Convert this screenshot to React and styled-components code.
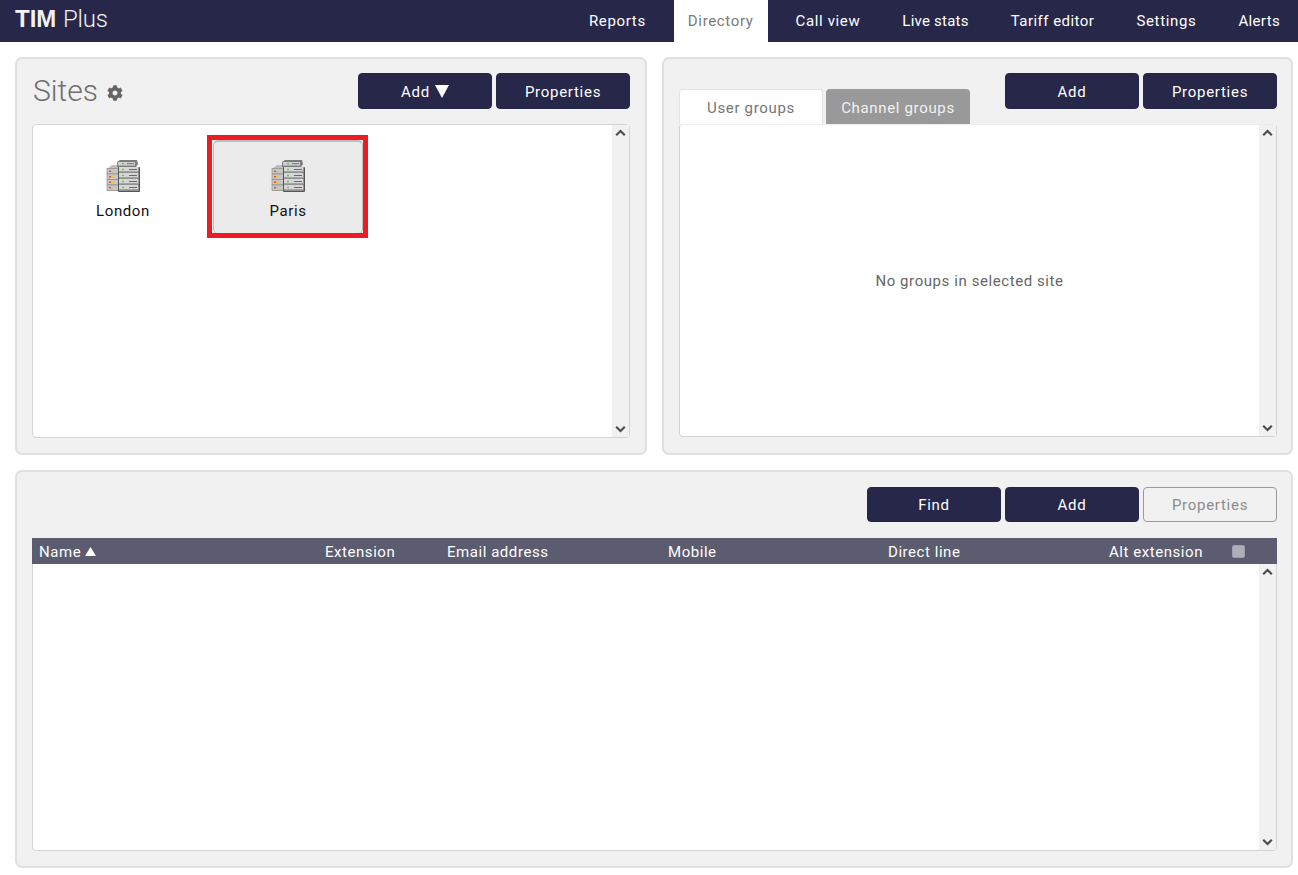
import React from 'react';
import styled, { createGlobalStyle } from 'styled-components';
import { FaCog } from 'react-icons/fa';

const Global = createGlobalStyle`
  html, body { margin: 0; padding: 0; background: #fff; }
  body { font-family: Roboto, "Liberation Sans", sans-serif; font-weight: 300; }
  * { box-sizing: border-box; }
`;

const Page = styled.div`
  width: 1298px;
  height: 875px;
  overflow: hidden;
`;
const Header = styled.header`
  height: 42px;
  background: #27274a;
  display: flex;
  justify-content: space-between;
  padding: 0 4px 0 15px;
`;
const Logo = styled.div`
  font-family: "Liberation Sans", Arial, sans-serif;
  color: #f2f2f2;
  font-size: 24px;
  line-height: 38px;
  b { font-weight: 700; letter-spacing: 0; }
  span { font-family: Roboto, sans-serif; font-weight: 300; letter-spacing: -0.2px; }
`;
const Nav = styled.nav`
  display: flex;
  gap: 14px;
`;
const NavItem = styled.a`
  padding: 0 14px;
  font-size: 15px;
  font-weight: 400;
  letter-spacing: ${p => p.$ls}px;
  line-height: 42px;
  color: ${p => (p.$active ? '#7a7a7a' : '#fff')};
  background: ${p => (p.$active ? '#fff' : 'transparent')};
`;
const Content = styled.main`
  display: grid;
  grid-template-columns: 632px 631px;
  grid-template-rows: 398px 398px;
  gap: 15px;
  padding: 15px 0 0 15px;
`;
const Panel = styled.section`
  position: relative;
  background: #f1f1f1;
  border: 2px solid #e0e0e0;
  border-radius: 7px;
  padding: ${p => p.$pad};
  display: flex;
  flex-direction: column;
  grid-column: ${p => (p.$wide ? '1 / 3' : 'auto')};
`;
const TopRow = styled.div`
  display: flex;
  align-items: flex-end;
  justify-content: space-between;
  height: 51px;
  flex: none;
`;
const Title = styled.h1`
  margin: 0 0 15px 1px;
  display: flex;
  align-items: center;
  gap: 9px;
  font-weight: 300;
  font-size: 30px;
  line-height: 36px;
  color: #6f6f6f;
  svg { color: #666; margin-top: 3px; }
`;
const Buttons = styled.div`
  display: flex;
  gap: 4px;
  margin-left: auto;
  align-self: flex-start;
`;
const Button = styled.button`
  width: 134px;
  height: ${p => p.$h || 36}px;
  border-radius: 4px;
  font: 400 15px Roboto, sans-serif;
  letter-spacing: 0.72px;
  display: flex;
  align-items: center;
  justify-content: center;
  gap: 5px;
  padding: 1px 0 0;
  color: ${p => (p.disabled ? '#8c8c8c' : '#fff')};
  background: ${p => (p.disabled ? '#f1f1f1' : '#27274a')};
  border: ${p => (p.disabled ? '1px solid #9a9a9a' : '1px solid #27274a')};
`;
const ListBox = styled.div`
  flex: 1;
  position: relative;
  background: #fff;
  border: 1px solid #d4d4d4;
  border-radius: 4px;
  display: flex;
  min-height: 0;
  ${p => p.$noTop && 'border-top-color: #ececec;'}
`;
const ListBody = styled.div`
  flex: 1;
  display: flex;
  align-items: flex-start;
  gap: 15px;
  padding: 15px;
`;
const Scrollbar = styled.div`
  width: 17px;
  flex: none;
  background: #f1f1f1;
  display: flex;
  flex-direction: column;
  justify-content: space-between;
  align-items: center;
  padding: 4px 0 4px;
`;
const Tile = styled.div`
  position: relative;
  width: 150px;
  height: 94px;
  border-radius: 5px;
  display: flex;
  flex-direction: column;
  align-items: center;
  padding-top: 18px;
  font-size: 15px;
  font-weight: 400;
  letter-spacing: 0.6px;
  color: #111;
  background: ${p => (p.$selected ? '#ebebeb' : 'transparent')};
  border: 1px solid ${p => (p.$selected ? '#bdbdbd' : 'transparent')};
  border-top-width: 2px;
  span { margin-top: 8px; line-height: 20px; }
`;
const Highlight = styled.div`
  position: absolute;
  left: -7px;
  top: -7px;
  width: 161px;
  height: 103px;
  border: 5px solid #ed1c24;
  pointer-events: none;
`;
const Tabs = styled.div`
  display: flex;
  gap: 3px;
  align-self: flex-end;
`;
const Tab = styled.div`
  width: 144px;
  height: 35px;
  border-radius: 4px 4px 0 0;
  text-align: center;
  font-size: 15px;
  font-weight: 400;
  letter-spacing: 0.66px;
  line-height: 37px;
  border: 1px solid ${p => (p.$active ? '#e4e4e4' : '#9a9a9a')};
  border-bottom: none;
  color: ${p => (p.$active ? '#757575' : '#f2f2f2')};
  background: ${p => (p.$active ? '#fff' : '#999')};
`;
const Message = styled.div`
  flex: 1;
  display: flex;
  align-items: center;
  justify-content: center;
  font-size: 15px;
  font-weight: 400;
  letter-spacing: 0.58px;
  color: #666;
`;
const TableHead = styled.div`
  display: grid;
  grid-template-columns: 286px 122px 221px 220px 221px 123px 1fr;
  align-items: center;
  height: 26px;
  flex: none;
  margin-top: 16px;
  padding-left: 7px;
  background: #5c5c70;
  color: #fff;
  font-size: 15px;
  font-weight: 400;
  letter-spacing: 0.55px;
`;
const HeadCell = styled.div`
  display: flex;
  align-items: center;
  gap: 4px;
  padding-top: 1px;
`;
const Check = styled.div`
  width: 13px;
  height: 13px;
  border-radius: 2px;
  background: #aeaeba;
  border: 1px solid #9c9cab;
`;
const TableBody = styled(ListBox)`
  border-top: none;
  border-radius: 0 0 4px 4px;
  justify-content: flex-end;
`;
const BottomButtons = styled.div`
  display: flex;
  justify-content: flex-end;
  gap: 4px;
  flex: none;
`;

const Chevron = ({ up }) => (
  <svg width="11" height="8" viewBox="0 0 11 8">
    <polyline
      points={up ? '1.2,6.2 5.5,2 9.8,6.2' : '1.2,1.8 5.5,6 9.8,1.8'}
      fill="none"
      stroke="#4d4d4d"
      strokeWidth="2.2"
    />
  </svg>
);

const Tri = ({ w, h, down, color = '#fff' }) => (
  <svg width={w} height={h} viewBox="0 0 10 10" preserveAspectRatio="none">
    <polygon points={down ? '0,0 10,0 5,10' : '0,10 10,10 5,0'} fill={color} />
  </svg>
);

const ServerIcon = () => (
  <svg width="36" height="33" viewBox="0 0 36 33">
    <polygon points="2,9 7,5 14,5 14,31 2,31" fill="#bdbdbd" />
    {[8.5, 14, 19.5, 25].map(y => (
      <g key={y}>
        <rect x="2" y={y} width="12" height="5.5" fill="#c6c6c6" stroke="#868686" strokeWidth="0.6" />
        <rect x="4" y={y + 2} width="2" height="1.5" fill="#e8542a" />
        <rect x="6" y={y + 2} width="2" height="1.5" fill="#f2c81e" />
      </g>
    ))}
    <rect x="13" y="7" width="22" height="25" rx="1" fill="#555" />
    {[7, 13, 19, 25].map(y => (
      <g key={y}>
        <rect x="14" y={y} width="19.5" height="5.4" fill="#d6d6d6" />
        <rect x="14" y={y + 4} width="19.5" height="1.4" fill="#a2a2a2" />
        <rect x="17" y={y + 1.8} width="2" height="1.4" fill="#3fdc5a" />
        <rect x="24" y={y + 2} width="8" height="1" fill="#6a6a6a" />
      </g>
    ))}
    <polygon points="12,2 15,0 32,0 33,4 31,7 12,7" fill="#7c7c7c" />
    <rect x="13" y="2" width="17" height="3.6" fill="#cfcfcf" />
    <rect x="17" y="3" width="2" height="1.4" fill="#3fdc5a" />
    <rect x="22" y="3.2" width="7" height="1" fill="#777" />
  </svg>
);

const Scroll = () => (
  <Scrollbar>
    <Chevron up />
    <Chevron />
  </Scrollbar>
);

const navItems = [
  ['Reports', 0.67],
  ['Directory', 0.64],
  ['Call view', 0.64],
  ['Live stats', 0.23],
  ['Tariff editor', 0.47],
  ['Settings', 0.65],
  ['Alerts', 0.35],
];

export default function App() {
  return (
    <Page>
      <Global />
      <Header>
        <Logo><b>TIM</b> <span>Plus</span></Logo>
        <Nav>
          {navItems.map(([n, ls]) => (
            <NavItem key={n} $ls={ls} $active={n === 'Directory'}>{n}</NavItem>
          ))}
        </Nav>
      </Header>
      <Content>
        <Panel $pad="14px 15px 15px 15px">
          <TopRow>
            <Title>Sites <FaCog size={16} /></Title>
            <Buttons>
              <Button>Add <Tri w={14} h={13} down /></Button>
              <Button>Properties</Button>
            </Buttons>
          </TopRow>
          <ListBox>
            <ListBody>
              <Tile><ServerIcon /><span>London</span></Tile>
              <Tile $selected>
                <ServerIcon /><span>Paris</span>
                <Highlight />
              </Tile>
            </ListBody>
            <Scroll />
          </ListBox>
        </Panel>
        <Panel $pad="14px 14px 16px 15px">
          <TopRow>
            <Tabs>
              <Tab $active>User groups</Tab>
              <Tab>Channel groups</Tab>
            </Tabs>
            <Buttons>
              <Button>Add</Button>
              <Button>Properties</Button>
            </Buttons>
          </TopRow>
          <ListBox $noTop>
            <Message>No groups in selected site</Message>
            <Scroll />
          </ListBox>
        </Panel>
        <Panel $wide $pad="15px 14px 15px 15px">
          <BottomButtons>
            <Button $h={35}>Find</Button>
            <Button $h={35}>Add</Button>
            <Button $h={35} disabled>Properties</Button>
          </BottomButtons>
          <TableHead>
            <HeadCell>Name <Tri w={11} h={9} /></HeadCell>
            <HeadCell>Extension</HeadCell>
            <HeadCell>Email address</HeadCell>
            <HeadCell>Mobile</HeadCell>
            <HeadCell>Direct line</HeadCell>
            <HeadCell>Alt extension</HeadCell>
            <Check />
          </TableHead>
          <TableBody>
            <Scroll />
          </TableBody>
        </Panel>
      </Content>
    </Page>
  );
}
